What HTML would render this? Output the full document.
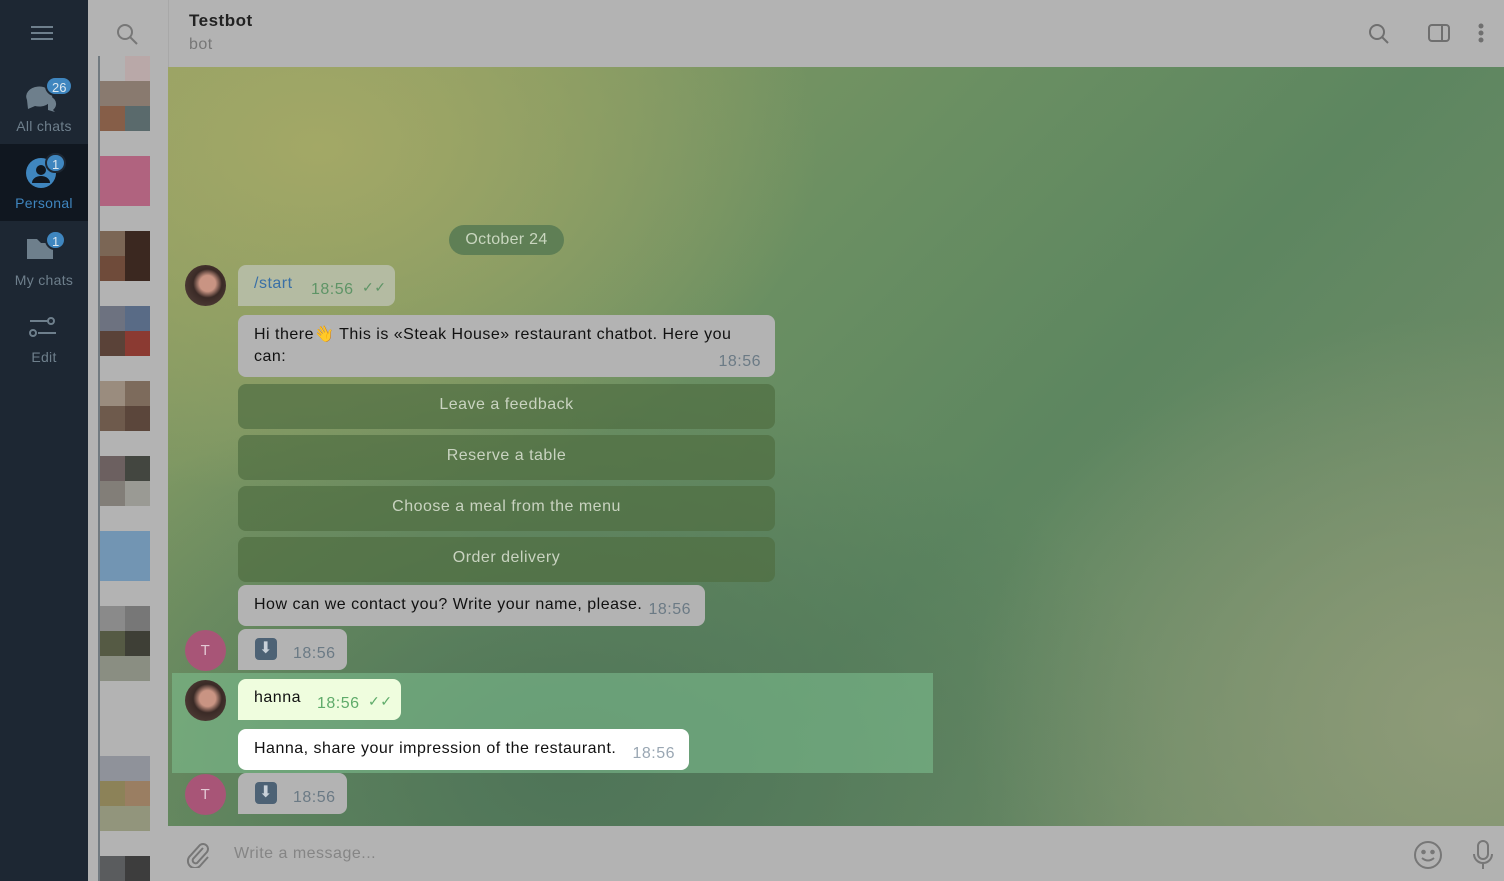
<!DOCTYPE html>
<html><head><meta charset="utf-8"><style>
*{margin:0;padding:0;box-sizing:border-box}
body{width:1504px;height:881px;overflow:hidden;font-family:"Liberation Sans",sans-serif;position:relative;background:#b3b3b3;letter-spacing:0.5px}
.side{position:absolute;left:0;top:0;width:88px;height:881px;background:#1d2733}
.side .it{position:absolute;left:0;width:88px;text-align:center;color:#6e7f8c;font-size:14px;letter-spacing:0.3px}
.badge{position:absolute;background:#3f86bf;color:#dde8f0;border-radius:10px;font-size:13px;height:20px;line-height:20px;padding:0 5px;min-width:20px;text-align:center;border:2px solid #1d2733;letter-spacing:0}
.list{position:absolute;left:88px;top:0;width:80px;height:881px;background:#b3b3b3}
.bl{position:absolute;width:25px;height:25px}
.chat{position:absolute;left:168px;top:67px;width:1336px;height:759px;
background:
radial-gradient(ellipse 500px 350px at 150px 80px,#a3a866 0%,rgba(163,168,102,0) 100%),
radial-gradient(ellipse 500px 400px at 1300px 650px,#8e9b78 0%,rgba(142,155,120,0) 100%),
radial-gradient(ellipse 600px 400px at 400px 700px,#4f7458 0%,rgba(79,116,88,0) 100%),
linear-gradient(135deg,#8f9e64 0%,#6a8f62 40%,#5d8660 60%,#7a8f6c 100%)}
.hdr{position:absolute;left:168px;top:0;width:1336px;height:67px;background:#b3b3b3;border-left:1px solid #a8a8a8}
.bub{position:absolute;background:#b3b3b3;border-radius:8px;font-size:16px;color:#111;padding:0 16px}
.t{color:#6b7a85;font-size:16px}
.btn{position:absolute;left:238px;width:537px;height:45px;background:rgba(80,110,65,.7);border-radius:8px;color:#c9d3c0;font-size:16px;text-align:center;line-height:42px}
.av{position:absolute;left:185px;width:41px;height:41px;border-radius:50%}
.ph{background:radial-gradient(circle at 55% 45%,#c99483 0 25%,#3a2a26 45%,#5a463f 100%)}
.tt{background:#a85577;color:#e3c9d4;font-size:15px;text-align:center;line-height:41px}
.dl{display:inline-block;width:22px;height:22px;background:#4d6275;border-radius:4px;position:relative;vertical-align:middle}
</style></head><body>
<div class="side">
 <div style="position:absolute;left:31px;top:26px;width:22px;height:2px;background:#6e7f8c;box-shadow:0 6px 0 #6e7f8c,0 12px 0 #6e7f8c"></div>
 <svg style="position:absolute;left:24px;top:80px" width="36" height="32"><path d="M3 20 a13 10 0 1 1 8 6 l-7 3z" fill="#6e7f8c"/><path d="M24 16 a9 8 0 0 1 5 14 l2 2 -7-2" fill="#6e7f8c"/></svg>
 <div class="badge" style="left:45px;top:76px">26</div>
 <div class="it" style="top:118px">All chats</div>
 <div style="position:absolute;left:0;top:144px;width:88px;height:77px;background:#101720"></div>
 <svg style="position:absolute;left:25px;top:157px" width="34" height="34"><circle cx="16" cy="16" r="15" fill="#3f86bf"/><circle cx="16" cy="13" r="5" fill="#101720"/><path d="M7 26 a9 7 0 0 1 18 0" fill="#101720"/></svg>
 <div class="badge" style="left:45px;top:153px">1</div>
 <div class="it" style="top:195px;color:#3f86bf">Personal</div>
 <svg style="position:absolute;left:27px;top:235px" width="32" height="28"><path d="M0 4 h10 l4 4 h12 v16 h-26z" fill="#6e7f8c"/></svg>
 <div class="badge" style="left:45px;top:230px">1</div>
 <div class="it" style="top:272px">My chats</div>
 <svg style="position:absolute;left:28px;top:316px" width="30" height="22" stroke="#6e7f8c" stroke-width="2" fill="none"><path d="M2 5h18M10 17h18"/><circle cx="23" cy="5" r="3"/><circle cx="5" cy="17" r="3"/></svg>
 <div class="it" style="top:349px">Edit</div>
</div>
<div class="list">
 <svg style="position:absolute;left:28px;top:23px" width="24" height="24" stroke="#777" stroke-width="2" fill="none"><circle cx="9" cy="9" r="7"/><path d="M14 14l7 7"/></svg>
 <div style="position:absolute;left:10px;top:56px;width:2px;height:825px;background:#717a80"></div>
 <div class="bl" style="left:37px;top:56px;background:#b9a8a8"></div>
 <div class="bl" style="left:12px;top:81px;width:50px;background:#897a6f"></div>
 <div class="bl" style="left:12px;top:106px;background:#865e48"></div>
 <div class="bl" style="left:37px;top:106px;background:#5a6a6c"></div>
 <div class="bl" style="left:12px;top:156px;width:50px;height:50px;background:#b0637f"></div>
 <div class="bl" style="left:12px;top:231px;background:#7b6655"></div>
 <div class="bl" style="left:37px;top:231px;height:50px;background:#3b2820"></div>
 <div class="bl" style="left:12px;top:256px;background:#6f4b3a"></div>
 <div class="bl" style="left:12px;top:306px;background:#6d7280"></div>
 <div class="bl" style="left:37px;top:306px;background:#596b86"></div>
 <div class="bl" style="left:12px;top:331px;background:#5a4238"></div>
 <div class="bl" style="left:37px;top:331px;background:#8b3a32"></div>
 <div class="bl" style="left:12px;top:381px;background:#9a8c7e"></div>
 <div class="bl" style="left:37px;top:381px;background:#7d6b5c"></div>
 <div class="bl" style="left:12px;top:406px;background:#6e5a4c"></div>
 <div class="bl" style="left:37px;top:406px;background:#5b463b"></div>
 <div class="bl" style="left:12px;top:456px;background:#6c6060"></div>
 <div class="bl" style="left:37px;top:456px;background:#434640"></div>
 <div class="bl" style="left:12px;top:481px;background:#827e78"></div>
 <div class="bl" style="left:37px;top:481px;background:#9a9a94"></div>
 <div class="bl" style="left:12px;top:531px;width:50px;height:50px;background:#7295b3"></div>
 <div class="bl" style="left:12px;top:606px;background:#8a8a8a"></div>
 <div class="bl" style="left:37px;top:606px;background:#777"></div>
 <div class="bl" style="left:12px;top:631px;background:#555a44"></div>
 <div class="bl" style="left:37px;top:631px;background:#3e3f36"></div>
 <div class="bl" style="left:12px;top:656px;width:50px;background:#8a8e82"></div>
 <div class="bl" style="left:12px;top:756px;width:50px;background:#8f929a"></div>
 <div class="bl" style="left:12px;top:781px;background:#8c8258"></div>
 <div class="bl" style="left:37px;top:781px;background:#9a7e62"></div>
 <div class="bl" style="left:12px;top:806px;width:50px;background:#92957c"></div>
 <div class="bl" style="left:12px;top:856px;background:#5a5c5e"></div>
 <div class="bl" style="left:37px;top:856px;background:#3d3d3d"></div>
</div>
<div class="hdr">
 <div style="position:absolute;left:20px;top:11px;font-size:17px;font-weight:bold;color:#222">Testbot</div>
 <div style="position:absolute;left:20px;top:36px;font-size:16px;color:#777">bot</div>
 <svg style="position:absolute;left:1199px;top:23px" width="24" height="24" stroke="#6f6f6f" stroke-width="2" fill="none"><circle cx="9" cy="9" r="7"/><path d="M14 14l6 6"/></svg>
 <svg style="position:absolute;left:1258px;top:23px" width="24" height="22" stroke="#6f6f6f" stroke-width="2" fill="none"><rect x="2" y="2" width="20" height="16" rx="3"/><path d="M15 2v16"/></svg>
 <svg style="position:absolute;left:1308px;top:22px" width="8" height="24" fill="#6f6f6f"><circle cx="4" cy="4" r="2.5"/><circle cx="4" cy="11" r="2.5"/><circle cx="4" cy="18" r="2.5"/></svg>
</div>
<div class="chat"></div>
<div style="position:absolute;left:449px;top:225px;width:115px;height:30px;border-radius:15px;background:#5f7f55;color:#c9d6bf;font-size:16px;text-align:center;line-height:30px;letter-spacing:0.3px">October 24</div>
<div class="av ph" style="top:265px"></div>
<div class="bub" style="left:238px;top:265px;width:157px;height:41px;background:#b4bba2;border-bottom-left-radius:0"><span style="position:absolute;left:16px;top:10px;color:#3a70a6">/start</span><span style="position:absolute;left:73px;top:16px;color:#5e9466">18:56</span><span style="position:absolute;left:124px;top:14px;color:#5e9466;font-size:14px">✓✓</span></div>
<div class="bub" style="left:238px;top:315px;width:537px;height:62px"><div style="padding-top:9px;line-height:22px;padding-right:20px">Hi there👋 This is «Steak House» restaurant chatbot. Here you can:</div><span class="t" style="position:absolute;right:14px;top:38px">18:56</span></div>
<div class="btn" style="top:384px">Leave a feedback</div>
<div class="btn" style="top:435px">Reserve a table</div>
<div class="btn" style="top:486px">Choose a meal from the menu</div>
<div class="btn" style="top:537px">Order delivery</div>
<div class="bub" style="left:238px;top:585px;width:467px;height:41px;line-height:40px">How can we contact you? Write your name, please.<span class="t" style="position:absolute;right:14px;top:5px">18:56</span></div>
<div class="av tt" style="top:630px">T</div>
<div class="bub" style="left:238px;top:629px;width:109px;height:41px;border-bottom-left-radius:0"><span class="dl" style="position:absolute;left:17px;top:9px"></span><span style="position:absolute;left:21px;top:9px;color:#c9d1d9;font-size:16px">⬇</span><span class="t" style="position:absolute;left:55px;top:16px">18:56</span></div>
<div style="position:absolute;left:172px;top:673px;width:761px;height:100px;background:rgba(130,200,150,.5)"></div>
<div class="av ph" style="top:680px"></div>
<div class="bub" style="left:238px;top:679px;width:163px;height:41px;background:#effdde;border-bottom-left-radius:0"><span style="position:absolute;left:16px;top:10px">hanna</span><span style="position:absolute;left:79px;top:16px;color:#5fab6a">18:56</span><span style="position:absolute;left:130px;top:14px;color:#5fab6a;font-size:14px">✓✓</span></div>
<div class="bub" style="left:238px;top:729px;width:451px;height:41px;background:#fff;line-height:40px">Hanna, share your impression of the restaurant.<span style="position:absolute;right:14px;top:5px;color:#9aa7b3">18:56</span></div>
<div class="av tt" style="top:774px">T</div>
<div class="bub" style="left:238px;top:773px;width:109px;height:41px;border-bottom-left-radius:0"><span class="dl" style="position:absolute;left:17px;top:9px"></span><span style="position:absolute;left:21px;top:9px;color:#c9d1d9;font-size:16px">⬇</span><span class="t" style="position:absolute;left:55px;top:16px">18:56</span></div>
<div style="position:absolute;left:168px;top:826px;width:1336px;height:55px;background:#b3b3b3">
 <svg style="position:absolute;left:17px;top:14px" width="26" height="28" stroke="#777" stroke-width="2" fill="none"><path d="M18 8 L8 19 a3 3 0 0 0 4 4 L22 12 a5 5 0 0 0 -7 -7 L5 16 a7 7 0 0 0 10 10 L23 17"/></svg>
 <div style="position:absolute;left:66px;top:19px;font-size:16px;color:#858585">Write a message...</div>
 <svg style="position:absolute;left:1245px;top:14px" width="30" height="30" stroke="#777" stroke-width="2" fill="none"><circle cx="15" cy="15" r="13"/><circle cx="10.5" cy="12" r="1.3" fill="#777"/><circle cx="19.5" cy="12" r="1.3" fill="#777"/><path d="M9 18 q6 5 12 0"/></svg>
 <svg style="position:absolute;left:1304px;top:13px" width="22" height="32" stroke="#777" stroke-width="2" fill="none"><rect x="6" y="2" width="10" height="18" rx="5"/><path d="M2 15 a9 9 0 0 0 18 0 M11 24v6"/></svg>
</div>
</body></html>
